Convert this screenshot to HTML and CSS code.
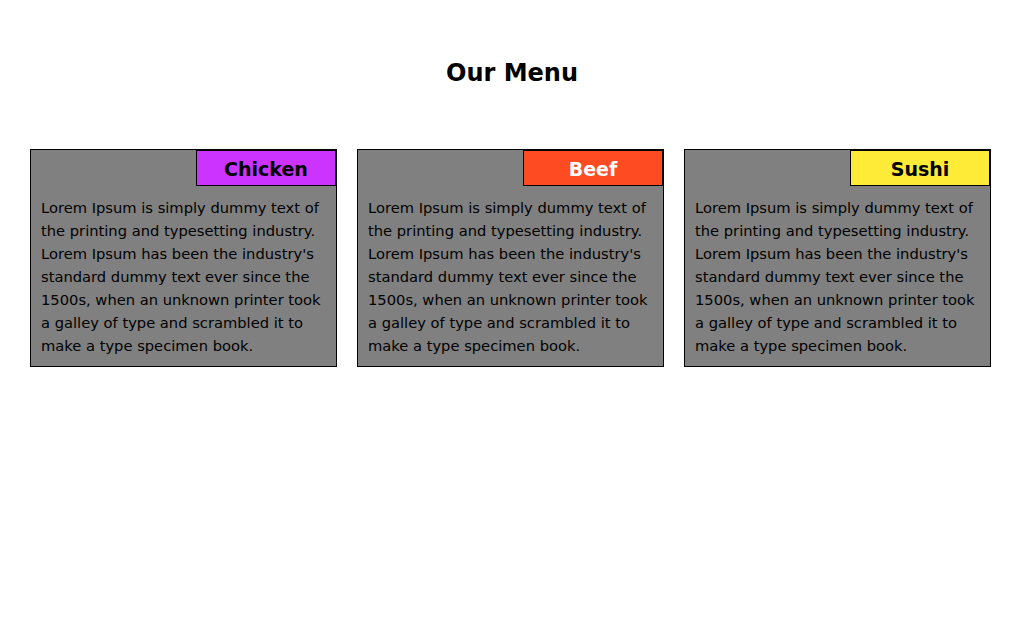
FILE: index.html
```html
<!DOCTYPE html>
<html>
<head>
<meta charset="utf-8">
<title>Our Menu</title>
<link rel="stylesheet" href="styles.css">
</head>
<body>
<h1 class="title">Our Menu</h1>
<div class="menu">
  <div class="card">
    <div class="card-head"><span class="tag tag-chicken">Chicken</span></div>
    <p class="card-text">Lorem Ipsum is simply dummy text of the printing and typesetting industry. Lorem Ipsum has been the industry's standard dummy text ever since the 1500s, when an unknown printer took a galley of type and scrambled it to make a type specimen book.</p>
  </div>
  <div class="card">
    <div class="card-head"><span class="tag tag-beef">Beef</span></div>
    <p class="card-text">Lorem Ipsum is simply dummy text of the printing and typesetting industry. Lorem Ipsum has been the industry's standard dummy text ever since the 1500s, when an unknown printer took a galley of type and scrambled it to make a type specimen book.</p>
  </div>
  <div class="card">
    <div class="card-head"><span class="tag tag-sushi">Sushi</span></div>
    <p class="card-text">Lorem Ipsum is simply dummy text of the printing and typesetting industry. Lorem Ipsum has been the industry's standard dummy text ever since the 1500s, when an unknown printer took a galley of type and scrambled it to make a type specimen book.</p>
  </div>
</div>
</body>
</html>
```
FILE: styles.css
```css
body {
  margin: 0;
  background: #fff;
  font-family: "DejaVu Sans", "Liberation Sans", sans-serif;
  color: #000;
}
.title {
  margin: 59px 0 0;
  height: 90px;
  line-height: 28px;
  font-size: 24px;
  font-weight: bold;
  text-align: center;
}
.menu {
  display: flex;
  gap: 20px;
  padding-left: 30px;
}
.card {
  width: 307px;
  box-sizing: border-box;
  border: 1px solid #000;
  background: #808080;
}
.card-head {
  display: flex;
  justify-content: flex-end;
}
.tag {
  width: 140px;
  height: 36px;
  box-sizing: border-box;
  border: 1px solid #000;
  display: flex;
  align-items: center;
  justify-content: center;
  padding-top: 2px;
  font-size: 19px;
  font-weight: bold;
}
.tag-chicken { background: #cc33ff; }
.tag-beef { background: #ff4b22; color: #fff; }
.tag-sushi { background: #fdeb37; }
.card-text {
  margin: 0;
  padding: 10px 10px 9px;
  font-size: 14.7px;
  line-height: 23px;
}
```
